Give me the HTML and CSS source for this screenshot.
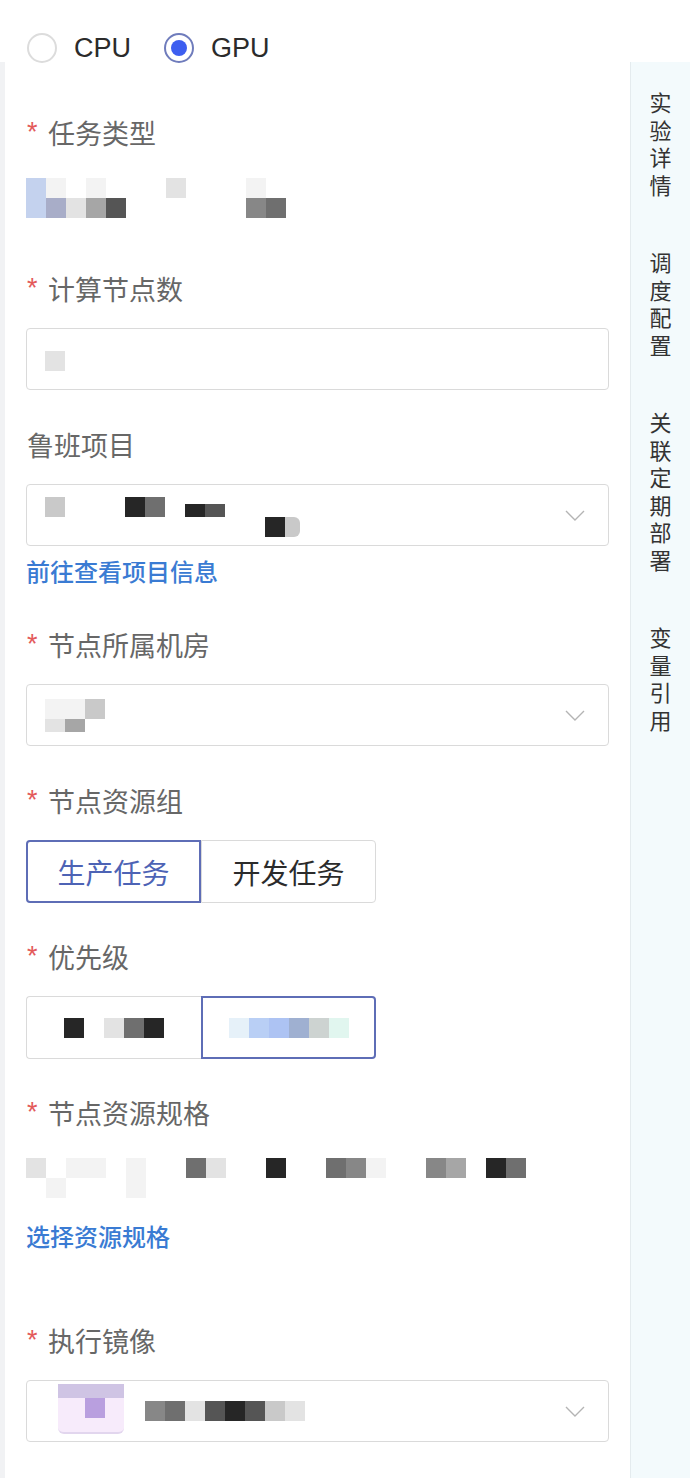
FILE: index.html
```html
<!DOCTYPE html>
<html lang="zh-CN">
<head>
    <meta charset="UTF-8">
    <meta name="viewport" content="width=device-width, initial-scale=1.0">
    <title>调度配置</title>
    <link rel="stylesheet" href="styles.css">
</head>
<body>
    <div class="choice">
        <label class="radio"><span class="dot"></span>CPU</label>
        <label class="radio on"><span class="dot"></span>GPU</label>
    </div>

    <div class="main">
        <div class="form">

            <div class="field first">
                <div class="label"><i>*</i>任务类型</div>
                <div class="value">
                    <div class="mosaic">
                        <div class="mrow"><b class="b1"></b><b class="g0"></b><b></b><b class="g0"></b><b></b><b></b><b></b><b class="g1"></b><b></b><b></b><b></b><b class="g0"></b></div>
                        <div class="mrow"><b class="b1"></b><b class="b2"></b><b class="g1"></b><b class="g3"></b><b class="g6"></b><b></b><b></b><b></b><b></b><b></b><b></b><b class="g4"></b><b class="g5"></b></div>
                    </div>
                </div>
            </div>

            <div class="field">
                <div class="label"><i>*</i>计算节点数</div>
                <div class="box">
                    <div class="mosaic low">
                        <div class="mrow"><b class="g1"></b></div>
                    </div>
                </div>
            </div>

            <div class="field link-field">
                <div class="label">鲁班项目</div>
                <div class="box select">
                    <div class="mosaic low">
                        <div class="mrow"><b class="g2"></b><b></b><b></b><b></b><b class="g7"></b><b class="g5"></b><b></b><b class="g7 thin"></b><b class="g6 thin"></b></div>
                        <div class="mrow"><b></b><b></b><b></b><b></b><b></b><b></b><b></b><b></b><b></b><b></b><b></b><b class="g7"></b><b class="g2 half"></b></div>
                    </div>
                    <svg class="arrow" width="20" height="11" viewBox="0 0 20 11"><polyline points="1,1 10,10 19,1" fill="none" stroke="#b4b4b4" stroke-width="1.4"/></svg>
                </div>
                <a class="link">前往查看项目信息</a>
            </div>

            <div class="field">
                <div class="label"><i>*</i>节点所属机房</div>
                <div class="box select">
                    <div class="mosaic">
                        <div class="mrow"><b class="g0"></b><b class="g0"></b><b class="g2"></b></div>
                        <div class="mrow short"><b class="g1"></b><b class="g3"></b></div>
                    </div>
                    <svg class="arrow" width="20" height="11" viewBox="0 0 20 11"><polyline points="1,1 10,10 19,1" fill="none" stroke="#b4b4b4" stroke-width="1.4"/></svg>
                </div>
            </div>

            <div class="field grp">
                <div class="label"><i>*</i>节点资源组</div>
                <div class="group">
                    <div class="seg active">生产任务</div>
                    <div class="seg">开发任务</div>
                </div>
            </div>

            <div class="field grp">
                <div class="label"><i>*</i>优先级</div>
                <div class="group">
                    <div class="seg">
                        <div class="mrow"><b class="g7"></b><b></b><b class="g1"></b><b class="g5"></b><b class="g7"></b></div>
                    </div>
                    <div class="seg active">
                        <div class="mrow"><b class="b3"></b><b class="b4"></b><b class="b5"></b><b class="b6"></b><b class="b7"></b><b class="b8"></b></div>
                    </div>
                </div>
            </div>

            <div class="field spec">
                <div class="label"><i>*</i>节点资源规格</div>
                <div class="value">
                    <div class="mosaic">
                        <div class="mrow"><b class="g1"></b><b></b><b class="g0"></b><b class="g0"></b><b></b><b class="g0"></b><b></b><b></b><b class="g5"></b><b class="g1"></b><b></b><b></b><b class="g7"></b><b></b><b></b><b class="g5"></b><b class="g4"></b><b class="g0"></b><b></b><b></b><b class="g4"></b><b class="g3"></b><b></b><b class="g7"></b><b class="g5"></b></div>
                        <div class="mrow"><b></b><b class="g0"></b><b></b><b></b><b></b><b class="g0"></b></div>
                    </div>
                </div>
                <a class="link">选择资源规格</a>
            </div>

            <div class="field">
                <div class="label"><i>*</i>执行镜像</div>
                <div class="box select image">
                    <div class="image-row">
                        <span class="logo"><span class="logo-mark"></span></span>
                        <div class="mrow"><b class="g4"></b><b class="g5"></b><b class="g1"></b><b class="g6"></b><b class="g7"></b><b class="g6"></b><b class="g2"></b><b class="g1"></b></div>
                    </div>
                    <svg class="arrow" width="20" height="11" viewBox="0 0 20 11"><polyline points="1,1 10,10 19,1" fill="none" stroke="#b4b4b4" stroke-width="1.4"/></svg>
                </div>
            </div>

        </div>

        <div class="side">
            <div class="tab">实验详情</div>
            <div class="tab">调度配置</div>
            <div class="tab">关联定期部署</div>
            <div class="tab">变量引用</div>
        </div>
    </div>
</body>
</html>
```

FILE: styles.css
```css
body {
    margin: 0;
    background: #fff;
    font-family: "Noto Sans CJK SC", "Noto Sans", sans-serif;
    color: #333;
}

/* cpu / gpu switch */
.choice {
    height: 62px;
    box-sizing: border-box;
    padding: 33px 0 0 27px;
    display: flex;
}

.radio {
    display: flex;
    align-items: center;
    height: 30px;
    margin-right: 33px;
    font-family: "Liberation Sans", Arial, sans-serif;
    font-size: 27px;
    color: #2b2b2b;
}

.radio .dot {
    width: 30px;
    height: 30px;
    box-sizing: border-box;
    border: 2px solid #dcdcdc;
    border-radius: 50%;
    margin-right: 17px;
    display: flex;
    align-items: center;
    justify-content: center;
}

.radio.on .dot {
    border-color: #6f7cbc;
}

.radio.on .dot::after {
    content: "";
    width: 16px;
    height: 16px;
    border-radius: 50%;
    background: #3d5ef0;
}

.main {
    display: flex;
    min-height: calc(100vh - 62px);
}

.form {
    flex: 1;
    border-left: 5px solid #f1f2f4;
    padding: 53px 21px 0 21px;
}

.field {
    margin-bottom: 37px;
}

.field.first {
    margin-bottom: 53px;
}

.field.link-field {
    margin-bottom: 40px;
}

.field.grp {
    margin-bottom: 36px;
}

.field.spec {
    margin-bottom: 71px;
}

.label {
    height: 36px;
    line-height: 36px;
    font-size: 27px;
    color: #676767;
    margin-bottom: 21px;
    padding-left: 1px;
}

.label i {
    font-style: normal;
    font-family: "Liberation Sans", Arial, sans-serif;
    color: #e35a5a;
    font-size: 27px;
    display: inline-block;
    width: 21px;
    vertical-align: top;
    position: relative;
    top: -1px;
}

.value {
    padding-top: 6px;
}

.box {
    height: 62px;
    box-sizing: border-box;
    border: 1.5px solid #dadada;
    border-radius: 4px;
    padding: 0 23px 0 18px;
    display: flex;
    align-items: center;
    justify-content: space-between;
}

.box.image {
    padding-left: 31px;
}

.link {
    display: block;
    margin-top: 9px;
    line-height: 32px;
    font-size: 24px;
    font-weight: 500;
    color: #3a7bd3;
}

.spec .link {
    margin-top: 22px;
}

/* segmented buttons */
.group {
    display: flex;
}

.seg {
    width: 175px;
    height: 63px;
    box-sizing: border-box;
    border: 1.5px solid #dadada;
    display: flex;
    align-items: center;
    justify-content: center;
    font-size: 28px;
    color: #2b2b2b;
}

.seg:first-child {
    border-radius: 4px 0 0 4px;
    border-right: none;
}

.seg:last-child {
    border-radius: 0 4px 4px 0;
}

.seg.active {
    border: 2px solid #5e6db6;
    color: #4d63b5;
}

/* blurred placeholder blocks */
.mrow {
    display: flex;
}

.mrow b {
    width: 20px;
    height: 20px;
    flex: none;
}

.mrow.short b {
    height: 13px;
}

.mrow b.thin {
    height: 13px;
    margin-top: 7px;
}

.mrow b.half {
    width: 15px;
    border-radius: 0 6px 6px 0;
}

.mosaic.low {
    margin-top: 4px;
}

.g0 { background: #f3f3f3; }
.g1 { background: #e3e3e3; }
.g2 { background: #c9c9c9; }
.g3 { background: #a6a6a6; }
.g4 { background: #878787; }
.g5 { background: #6f6f6f; }
.g6 { background: #555; }
.g7 { background: #262626; }
.b1 { background: #c4d2ee; }
.b2 { background: #a8adc8; }
.b3 { background: #e6f1f9; }
.b4 { background: #b9cff5; }
.b5 { background: #adc3f3; }
.b6 { background: #9fb0d1; }
.b7 { background: #cdd3d1; }
.b8 { background: #e1f6ef; }

.image-row {
    display: flex;
    align-items: center;
}

.logo {
    width: 66px;
    height: 50px;
    box-sizing: border-box;
    border-top: 14px solid #cfc4e4;
    border-radius: 0 0 6px 6px;
    border-bottom: 2px solid #e2d6ee;
    background: #f7ebfb;
    margin-right: 21px;
    display: flex;
    justify-content: center;
    position: relative;
    top: -2px;
}

.logo-mark {
    width: 20px;
    height: 20px;
    margin-left: 8px;
    background: #b99fdf;
}

/* right side anchors */
.side {
    width: 60px;
    flex: none;
    background: #f3fafc;
    border-left: 1px solid #e4ebee;
    box-sizing: border-box;
    padding-top: 30px;
    display: flex;
    flex-direction: column;
    align-items: center;
}

.tab {
    writing-mode: vertical-rl;
    text-orientation: upright;
    font-size: 22px;
    line-height: 22px;
    letter-spacing: 5.5px;
    color: #333;
    margin-bottom: 50px;
}
```
